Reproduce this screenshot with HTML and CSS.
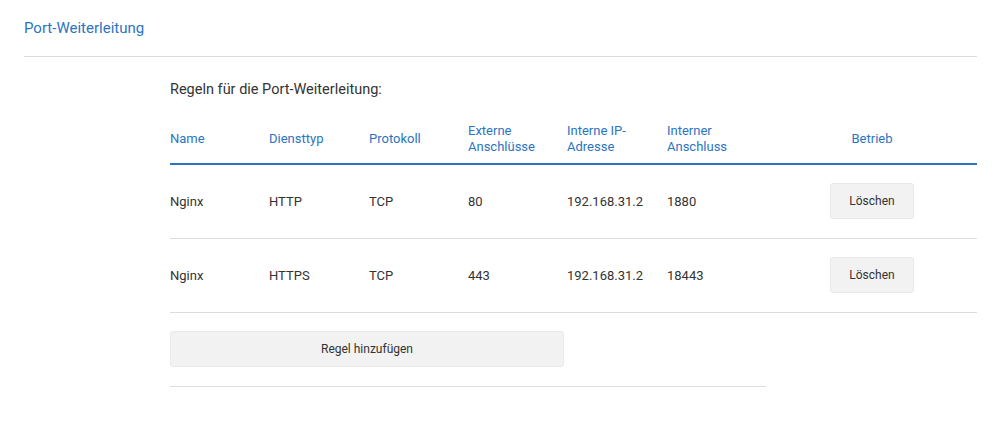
FILE: index.html
```html
<!DOCTYPE html>
<html lang="de">
<head>
    <meta charset="UTF-8">
    <meta name="viewport" content="width=device-width, initial-scale=1.0">
    <title>Port-Weiterleitung</title>
    <link rel="stylesheet" href="styles.css">
</head>
<body>
    <div class="page">
        <div class="page-title">Port-Weiterleitung</div>
        <div class="section">
            <div class="section-label">Regeln für die Port-Weiterleitung:</div>
            <table class="rules">
                <colgroup>
                    <col class="c1"><col class="c2"><col class="c3"><col class="c4"><col class="c5"><col class="c6"><col class="c7">
                </colgroup>
                <thead>
                    <tr>
                        <th>Name</th>
                        <th>Diensttyp</th>
                        <th>Protokoll</th>
                        <th>Externe<br>Anschlüsse</th>
                        <th>Interne IP-<br>Adresse</th>
                        <th>Interner<br>Anschluss</th>
                        <th class="op">Betrieb</th>
                    </tr>
                </thead>
                <tbody>
                    <tr>
                        <td>Nginx</td>
                        <td>HTTP</td>
                        <td>TCP</td>
                        <td>80</td>
                        <td>192.168.31.2</td>
                        <td>1880</td>
                        <td class="op"><button class="btn btn-small">Löschen</button></td>
                    </tr>
                    <tr>
                        <td>Nginx</td>
                        <td>HTTPS</td>
                        <td>TCP</td>
                        <td>443</td>
                        <td>192.168.31.2</td>
                        <td>18443</td>
                        <td class="op"><button class="btn btn-small">Löschen</button></td>
                    </tr>
                </tbody>
            </table>
            <div class="add-row">
                <button class="btn btn-wide">Regel hinzufügen</button>
            </div>
        </div>
    </div>
</body>
</html>
```

FILE: styles.css
```css
* {
    box-sizing: border-box;
}

body {
    margin: 0;
    font-family: Roboto, 'Liberation Sans', sans-serif;
    background: #fff;
    color: #333;
}

.page {
    padding: 18px 23px 0 24px;
}

.page-title {
    font-size: 15px;
    line-height: 20px;
    color: #2b74c2;
    padding-bottom: 18px;
    border-bottom: 1px solid #dcdcdc;
}

.section {
    padding-left: 146px;
}

.section-label {
    font-size: 14.5px;
    line-height: 20px;
    margin-top: 23px;
    margin-bottom: 14px;
}

.rules {
    width: 807px;
    border-collapse: collapse;
    table-layout: fixed;
}

.c1 { width: 99px; }
.c2 { width: 100px; }
.c3 { width: 99px; }
.c4 { width: 99px; }
.c5 { width: 100px; }
.c6 { width: 100px; }
.c7 { width: 210px; }

.rules th {
    text-align: left;
    font-weight: normal;
    font-size: 13px;
    line-height: 16px;
    color: #2b74c2;
    padding: 8px 0;
    height: 50px;
    vertical-align: middle;
    border-bottom: 2px solid #2b74c2;
}

.rules td {
    font-size: 13px;
    color: #333;
    height: 74px;
    padding: 0;
    vertical-align: middle;
    border-bottom: 1px solid #dcdcdc;
}

.rules .op {
    text-align: center;
}

.btn {
    font-family: inherit;
    font-size: 12px;
    color: #333;
    background: #f2f2f2;
    border: 1px solid #e9e9e9;
    border-radius: 3px;
    height: 36px;
    cursor: pointer;
}

.btn-small {
    width: 84px;
}

.add-row {
    width: 596px;
    padding: 18px 0 19px;
    border-bottom: 1px solid #dcdcdc;
}

.btn-wide {
    width: 394px;
    display: block;
}
```
